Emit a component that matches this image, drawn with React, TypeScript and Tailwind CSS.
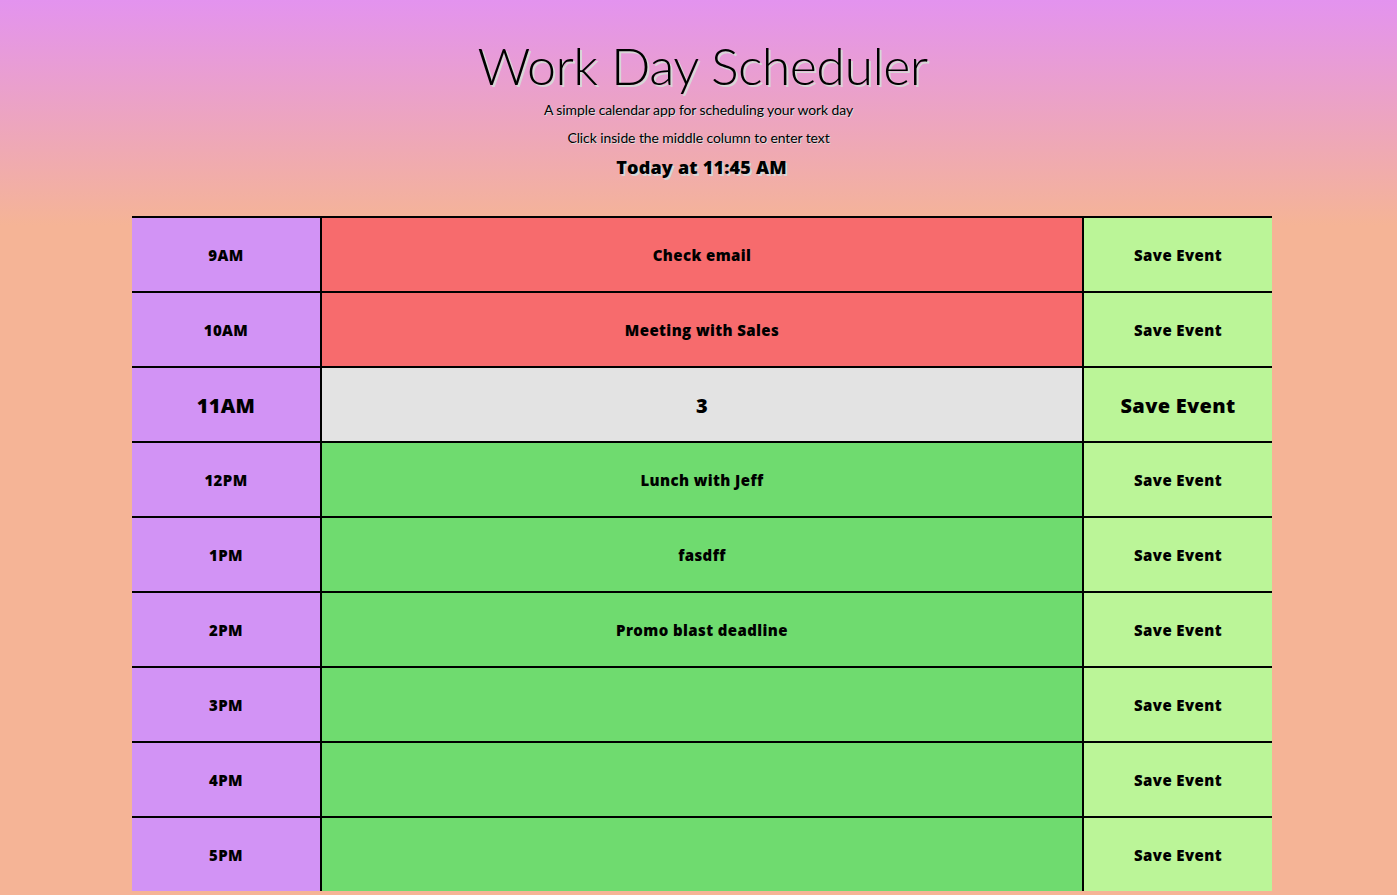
import React from "react";

type Row = { hour: string; text: string; state: "past" | "present" | "future" };

const rows: Row[] = [
  { hour: "9AM", text: "Check email", state: "past" },
  { hour: "10AM", text: "Meeting with Sales", state: "past" },
  { hour: "11AM", text: "3", state: "present" },
  { hour: "12PM", text: "Lunch with Jeff", state: "future" },
  { hour: "1PM", text: "fasdff", state: "future" },
  { hour: "2PM", text: "Promo blast deadline", state: "future" },
  { hour: "3PM", text: "", state: "future" },
  { hour: "4PM", text: "", state: "future" },
  { hour: "5PM", text: "", state: "future" },
];

const light = { fontFamily: "Lato, 'Open Sans', sans-serif" };
const heavy = { fontFamily: "'Open Sans', Lato, sans-serif" };

export default function App() {
  return (
    <div className="min-h-[895px] w-full bg-[linear-gradient(to_bottom,#e393ef_0px,#f5b496_225px,#f5b496_100%)] text-black">
      <header className="flex flex-col items-center pt-[31px] pb-[36px]">
        <h1
          className="pl-[8px] text-[52px] font-light leading-[68px] tracking-[-0.6px] [text-shadow:2px_2px_0_#d7d7d7]"
          style={light}
        >
          Work Day Scheduler
        </h1>
        <p
          className="-mt-[3px] text-[14px] font-normal leading-[28px] tracking-[-0.1px] [text-shadow:1px_1px_0_#dddddd]"
          style={light}
        >
          A simple calendar app for scheduling your work day
        </p>
        <p
          className="text-[14px] font-normal leading-[28px] tracking-[-0.1px] [text-shadow:1px_1px_0_#dddddd]"
          style={light}
        >
          Click inside the middle column to enter text
        </p>
        <p
          className="mt-[2px] pl-[6px] text-[18px] font-extrabold leading-[26px] tracking-[0.2px] [text-shadow:2px_2px_0_#d7d7d7]"
          style={heavy}
        >
          Today at 11:45 AM
        </p>
      </header>
      <div className="flex justify-center pl-[7px]">
        <div className="w-[1140px]" style={heavy}>
          {rows.map((r) => {
            const big = r.state === "present";
            const mid =
              r.state === "past"
                ? "bg-[#f76b6d]"
                : r.state === "present"
                ? "bg-[#e3e3e3]"
                : "bg-[#6fdb6f]";
            const size = big
              ? "text-[20px] tracking-[0.3px]"
              : "text-[15px] tracking-[0.4px]";
            return (
              <div key={r.hour} className="flex h-[75px] border-t-2 border-black">
                <div
                  className={`flex w-[188px] items-center justify-center bg-[#d293f5] pt-[2px] font-extrabold ${size}`}
                >
                  {r.hour}
                </div>
                <div
                  className={`flex w-[764px] items-center justify-center border-x-2 border-black pt-[2px] font-extrabold ${mid} ${size}`}
                >
                  {r.text}
                </div>
                <div
                  className={`flex w-[188px] items-center justify-center bg-[#bbf598] pt-[2px] font-extrabold ${size}`}
                >
                  Save Event
                </div>
              </div>
            );
          })}
        </div>
      </div>
    </div>
  );
}
